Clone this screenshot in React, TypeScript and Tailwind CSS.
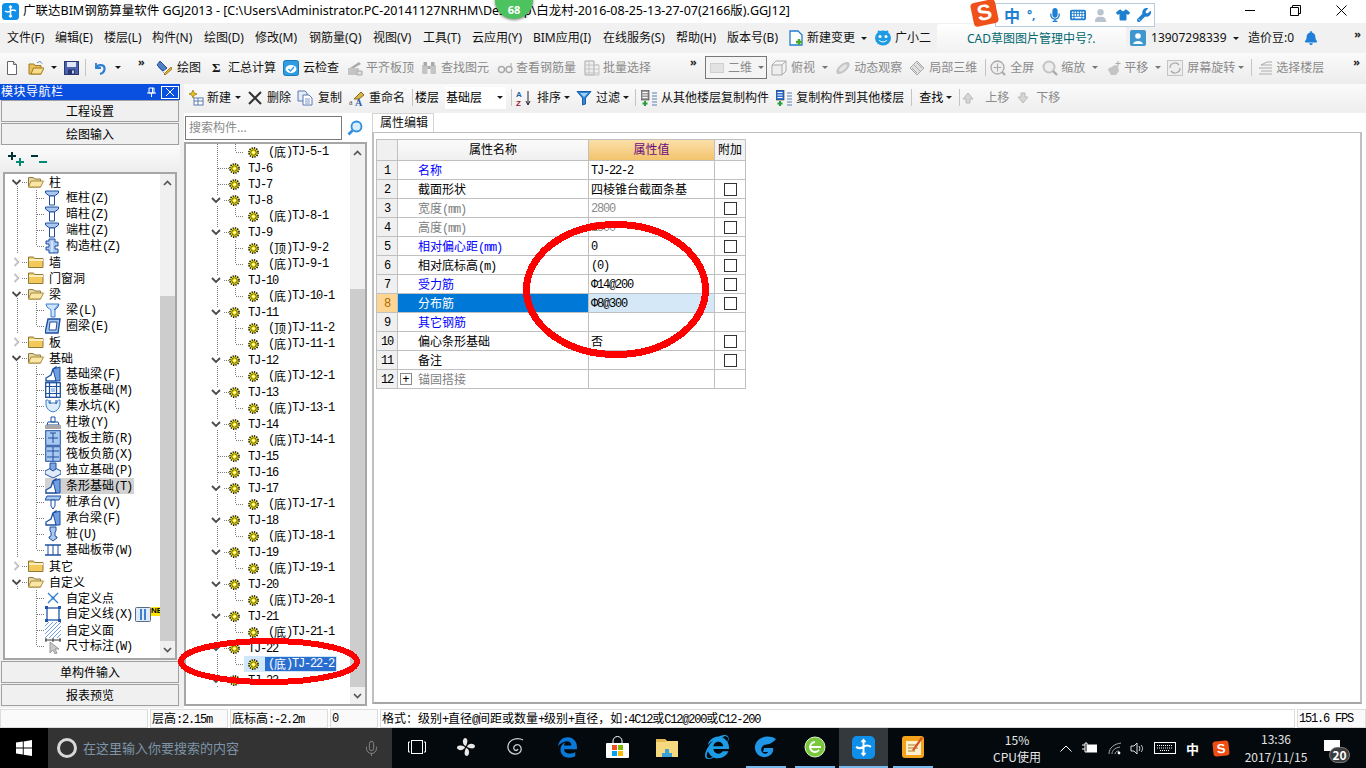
import type { ReactNode } from "react";
import { Mic } from "lucide-react";
import { FaEdgeLegacy, FaInternetExplorer, FaMicrophone, FaKeyboard, FaUser, FaShirt, FaWrench, FaBell } from "react-icons/fa6";

const SANS = "[font-family:'Noto_Sans','Noto_Sans_CJK_SC',sans-serif]";
const CJK = "[font-family:'Noto_Sans_CJK_SC',sans-serif]";

/* bitmap-looking mixed text: ascii goes in a tight mono, the rest stays cjk */
function Sim({ text, className = "" }: { text: string; className?: string }) {
  const parts = text.match(/[\x00-\x7fΦ]+|[^\x00-\x7fΦ]+/g) ?? [];
  return (
    <span className={`whitespace-nowrap leading-none ${className}`}>
      {parts.map((p, i) =>
        /^[\x00-\x7fΦ]/.test(p) ? (
          <span key={i} className="[font-family:'Liberation_Mono',monospace] text-[12px] tracking-[-1.2px]">{p}</span>
        ) : (
          <span key={i} className={CJK}>{p}</span>
        )
      )}
    </span>
  );
}

function Ic({ children, w = 16, h = 16 }: { children: ReactNode; w?: number; h?: number }) {
  return (
    <svg width={w} height={h} viewBox={`0 0 ${w} ${h}`} className="shrink-0" fill="none">
      {children}
    </svg>
  );
}

const Caret = ({ dark = true }: { dark?: boolean }) => (
  <span className={`inline-block w-0 h-0 shrink-0 border-x-[3px] border-t-[3px] border-x-transparent ${dark ? "border-t-[#1a1a1a]" : "border-t-[#777]"}`} />
);
const Sep = ({ className = "" }: { className?: string }) => <span className={`w-px h-[17px] bg-[#c4c4c4] shrink-0 ${className}`} />;
const More = ({ className = "" }: { className?: string }) => (
  <span className={`w-[9px] self-start mt-[3px] text-[11px] leading-none font-bold text-[#222] tracking-[-1px] shrink-0 ${className}`}>»</span>
);

function Tool({ icon, label, gray, gap, className = "" }: { icon?: ReactNode; label: string; gray?: boolean; gap: string; className?: string }) {
  return (
    <div className={`flex items-center shrink-0 whitespace-nowrap ${gap} ${className} ${gray ? "text-[#8a8a8a]" : "text-[#111]"}`}>
      {icon}
      <span>{label}</span>
    </div>
  );
}

/* ---------- toolbar icons ---------- */
const AppIcon = ({ size = 17 }: { size?: number }) => (
  <svg width={size} height={size} viewBox="0 0 17 17" className="shrink-0">
    <rect width="17" height="17" rx="3.5" fill="#0f8fe8" />
    <path d="M8.5 3v11M3 8c2 1.4 3.5 1.4 5.5 0s3.500-1.400 5.500 0" stroke="#fff" strokeWidth="1.500" fill="none" />
    <path d="M7 4.500 8.500 2.800 10 4.500M7 12.500 8.500 14.200 10 12.500" stroke="#fff" strokeWidth="1.200" fill="none" />
  </svg>
);
const NewDoc = () => <Ic w={12}><path d="M1.500 1.500h6l3 3v10h-9z" fill="#fff" stroke="#666" /><path d="M7.500 1.500v3h3" fill="#ddd" stroke="#666" /></Ic>;
const OpenIc = () => <Ic><path d="M1 4h5l1 1.500h6V14H1z" fill="#e8c060" stroke="#a07a20" /><path d="M3 14 5.500 8H16l-3 6z" fill="#f7dc8c" stroke="#a07a20" /><path d="M9 3c2-2 4-1.500 5 .5" stroke="#3f7fc0" /></Ic>;
const SaveIc = () => <Ic w={15}><rect x=".5" y="1.500" width="14" height="13" fill="#4a62b0" stroke="#27376f" /><rect x="3" y="2" width="9" height="5" fill="#dfe6f5" /><rect x="4" y="9.500" width="7" height="5" fill="#28356b" /><rect x="8" y="10.500" width="2" height="3" fill="#c8d0e8" /></Ic>;
const UndoIc = () => <Ic w={14}><path d="M3 3v5h5" stroke="#2f7fd0" strokeWidth="1.800" /><path d="M3 8c2-4 9-4 8.500 1.500C11 12 9 13.500 7 14" stroke="#2f7fd0" strokeWidth="2.200" /></Ic>;
const DrawIc = () => <Ic><path d="M4 1 11 8 7 11 1 5z" fill="#4f7fc4" stroke="#2a4f8c" /><path d="M8 14 15 7l1 2-7 6z" fill="#e9b93a" stroke="#a07a20" /><path d="M2 7l6 6" stroke="#8ab0e0" /></Ic>;
const CloudIc = () => <Ic><rect x=".5" y=".5" width="15" height="15" rx="2" fill="#2f9be0" stroke="#1b78bb" /><ellipse cx="8" cy="9" rx="5.500" ry="4" fill="#fff" /><path d="M5.500 9 7.500 11 11 7" stroke="#2f9be0" strokeWidth="1.400" /></Ic>;
const G = "#c4c4c4";
const GD = "#a9a9a9";
const AlignIc = () => <Ic><path d="M1 8h11v7H1z" fill={G} /><path d="M3 8 12 2l2 2-7 4z" fill={GD} /><path d="M10 11h5v4h-5z" fill="#ddd" stroke={GD} /></Ic>;
const BinoIc = () => <Ic><rect x="1" y="5" width="5.500" height="9" rx="1" fill={G} /><rect x="9.500" y="5" width="5.500" height="9" rx="1" fill={G} /><rect x="2.500" y="2" width="3.500" height="4" fill={GD} /><rect x="10" y="2" width="3.500" height="4" fill={GD} /><rect x="6.500" y="6" width="3" height="3" fill={GD} /></Ic>;
const GlassIc = () => <Ic><circle cx="4.500" cy="9.500" r="3" stroke={GD} strokeWidth="1.400" /><circle cx="12" cy="9.500" r="3" stroke={GD} strokeWidth="1.400" /><path d="M7.500 9h1.500M14 3v4" stroke={GD} /></Ic>;
const BatchIc = () => <Ic><path d="M1 1h9v14H1z" fill="#eee" stroke={GD} /><path d="M1 5h14M1 9h14M1 13h14M5 1v14M10 5h5v10h-5" stroke={G} /></Ic>;
const CubeIc = () => <Ic><path d="M1 5h10v10H1z" fill="#eee" stroke={GD} /><path d="M1 5l4-4h10v10l-4 4M11 5l4-4" stroke={GD} /></Ic>;
const OrbitIc = () => <Ic><ellipse cx="8" cy="8" rx="8" ry="4" transform="rotate(-40 8 8)" fill={G} /><ellipse cx="8" cy="8" rx="5" ry="2" transform="rotate(-40 8 8)" fill="#e4e4e4" /></Ic>;
const Part3dIc = () => <Ic><path d="M1 8 8 1l7 7-7 7z" fill="#e0e0e0" stroke={GD} /><path d="M5 5l7 7M8 3l5 5M3 8l5 5" stroke={GD} /></Ic>;
const FullIc = () => <Ic><circle cx="7.500" cy="7.500" r="6.500" fill="#eee" stroke={GD} strokeWidth="1.300" /><path d="M7.500 3.500v8M3.500 7.500h8" stroke={GD} /><path d="M12 12l3 3" stroke={GD} strokeWidth="2" /></Ic>;
const ZoomIc = () => <Ic><circle cx="7" cy="7" r="5.500" fill="#eee" stroke={G} strokeWidth="2" /><path d="M11 11l4 4" stroke={GD} strokeWidth="2.400" /></Ic>;
const PanIc = () => <Ic><path d="M2 10c0-3 4-2 5-4l2-1 3 1 1 5-3 4H5z" fill={G} /><path d="M12 1v5M9.500 3.500h5" stroke={GD} /></Ic>;
const RotIc = () => <Ic><rect x=".5" y=".5" width="15" height="15" fill="#eee" stroke={G} /><path d="M3 8a5 5 0 0 1 9-3M13 8a5 5 0 0 1-9 3" stroke={GD} strokeWidth="1.300" /></Ic>;
const FloorIc = () => <Ic><path d="M3 5h11M1 8h13M3 11h11M1 14h13" stroke={G} strokeWidth="1.500" /><path d="M3 5l6-3h5" stroke={GD} /></Ic>;
const NewItemIc = () => <Ic><path d="M5 0l1.200 2.800L9 4 6.200 5.200 5 8 3.800 5.200 1 4l2.800-1.200z" fill="#f0c020" stroke="#7a6000" strokeWidth=".6" /><rect x="6" y="8" width="9" height="7" fill="#fff" stroke="#5a7ab0" /><path d="M6 11h9M10 8v7" stroke="#5a7ab0" /></Ic>;
const CopyIc = () => <Ic><path d="M1 1h7l2 2v8H1z" fill="#e4ecf8" stroke="#5a7ab0" /><path d="M6 5h6l3 3v7H6z" fill="#fff" stroke="#5a7ab0" /><path d="M8 9h5M8 11h5M8 13h5" stroke="#7a9ad0" /></Ic>;
const RenameIc = () => <Ic><path d="M5 9 12 2l3 3-5 4z" fill="#d9b24c" stroke="#8a6c18" /><text x="0" y="15" fontSize="8" fill="#555" className="[font-family:'Liberation_Serif',serif]">a</text><text x="6" y="15.500" fontSize="10" fontWeight="700" fill="#2a5fa8" className="[font-family:'Liberation_Serif',serif]">A</text></Ic>;
const SortIc = () => <Ic><text x="0" y="7" fontSize="8" fontWeight="700" fill="#2a5fa8" className="[font-family:'Liberation_Sans',sans-serif]">A</text><text x="0" y="15.500" fontSize="8" fontWeight="700" fill="#9a2030" className="[font-family:'Liberation_Sans',sans-serif]">Z</text><path d="M12 1v13M10 11l2 4 2-4" stroke="#222" /></Ic>;
const FunnelIc = () => <Ic><path d="M1 1.500h14L9.500 8v6l-3 1V8z" fill="#2f86d8" stroke="#1c5fa8" /><path d="M4 3h8L8 7z" fill="#9fd0f5" /></Ic>;
const StackIc = ({ top }: { top: string }) => <Ic><rect x="0" y="0" width="8" height="10" fill={top} stroke="#333" strokeWidth=".6" /><path d="M1.500 2.500h5M1.500 5h5M1.500 7.500h5" stroke="#fff" /><path d="M11 3h5M11 6h5M11 9h5M11 12h5M11 15h5" stroke="#557fb0" strokeWidth="1.200" /><path d="M4 11v5M1.500 13.500h5" stroke="#27a03a" strokeWidth="2" /></Ic>;
const UpIc = () => <Ic><path d="M8 3l5 6h-3v4H6V9H3z" fill="#d5d5d5" stroke="#bbb" /></Ic>;
const DownIc = () => <Ic><path d="M8 13 3 7h3V3h4v4h3z" fill="#d5d5d5" stroke="#bbb" /></Ic>;

/* ---------- nav tree icons ---------- */
const B = "#1d4fa0";
const L = "#a8c8ef";
const Folder = ({ open }: { open: boolean }) =>
  open ? (
    <Ic><path d="M.5 3.500h5l1 1.500h6v8H.5z" fill="#e9d7a0" stroke="#8d7a40" /><path d="M3 7h12.500l-3 6H.5z" fill="#fbe6a6" stroke="#a98b3c" /></Ic>
  ) : (
    <Ic><path d="M.5 3h5l1 1.500h8.500v9H.5z" fill="#f4c95a" stroke="#8d7a40" /><path d="M1 5h14v2H1z" fill="#fdf0bc" /></Ic>
  );
const TCol = () => <Ic><path d="M.5 1h13v2L9.500 6H4.500L.5 3z" fill={L} stroke={B} /><path d="M4.500 6h5v9h-5z" fill="#fff" stroke={B} /></Ic>;
const PuzzleIc = () => <Ic><path d="M4 1h6v3h3v4h-3v3h3v4H4v-3H1V9h3V6H1V3h3z" fill={L} stroke={B} /><path d="M7 3v11" stroke="#fff" /></Ic>;
const BeamIc = () => <Ic><path d="M1 2h13l-1 3-3 3v7H6V8L2 5z" fill="#cfe3fa" stroke="#3d7fd0" /><path d="M9 8l5-6" stroke="#3d7fd0" /></Ic>;
const RingIc = () => <Ic><path d="M3 1h12l-2 14H0z" fill={L} stroke={B} strokeWidth="1.400" /><path d="M5 4h7l-1 8H4z" fill="#fff" stroke={B} /></Ic>;
const FootIc = () => <Ic><path d="M1 15v-3l5-3 2-6 3-2v14z" fill="#fff" stroke={B} strokeWidth="1.300" /><path d="M8 3l7-2v14h-4z" fill="#6f9fe0" stroke={B} /></Ic>;
const RaftIc = () => <Ic><rect x=".7" y=".7" width="14.600" height="14.600" fill="#fff" stroke={B} strokeWidth="1.300" /><path d="M.7 4.500h14.600M.7 11.500h14.600M4.500.7v14.600M11.500.7v14.600" stroke={B} strokeWidth="1.200" /><rect x="6" y="6" width="4" height="4" fill={L} /></Ic>;
const PitIc = () => <Ic><path d="M1 2c2 0 3 0 3 3h8c0-3 1-3 3-3v5c-1 4-3 6-7 7-4-1-6-3-7-7z" fill="#dcecfb" stroke="#3d7fd0" /><path d="M5 2v4M11 2v4" stroke={B} /></Ic>;
const PierIc = () => <Ic><path d="M6 3h4v5H6zM3 8h10l1 3H2z" fill="#fff" stroke={B} /><rect y="11" width="16" height="4" fill="#a8a8a8" /></Ic>;
const RaftMain = () => <Ic><rect x=".7" y=".7" width="14.600" height="14.600" fill={L} stroke={B} /><path d="M8 3v10M3 8h10M5 3h6" stroke={B} /></Ic>;
const RaftNeg = () => <Ic><rect x=".7" y=".7" width="14.600" height="14.600" fill={L} stroke={B} /><path d="M2 5h12M2 11h12M8 1v14" stroke={B} /></Ic>;
const BlockIc = () => <Ic><path d="M0 9l8-4 8 4v3l-8 4-8-4z" fill="#dfeafa" stroke={B} /><path d="M5 1h6v6l-3 2-3-2z" fill="#7fa8e0" stroke={B} /></Ic>;
const CapIc = () => <Ic><path d="M2 2h14l-2 4H0z" fill={L} stroke={B} /><path d="M6 6h4v6l-2 3-2-3z" fill="#fff" stroke={B} /></Ic>;
const PileIc = () => <Ic><path d="M5 1h6v4l-1 1v4l2 1v1l-4 3-4-3v-1l2-1V6L5 5z" fill={L} stroke={B} /></Ic>;
const BandIc = () => <Ic><path d="M0 3h16M0 13h16" stroke={B} strokeWidth="1.300" /><path d="M3 3v10M8 3v10M13 3v10" stroke={B} /></Ic>;
const XIc = () => <Ic><path d="M3 3l10 10M13 3 3 13" stroke="#2f7fd0" strokeWidth="1.300" /><circle cx="8" cy="8" r="1.500" fill="#2f7fd0" /></Ic>;
const LineIc = () => <Ic><rect x="2" y="2" width="12" height="12" fill="#fff" stroke="#1d55a8" strokeWidth="1.300" /><path d="M0 0h3v3H0zM13 0h3v3h-3zM0 13h3v3H0zM13 13h3v3h-3z" fill="#1d55a8" /></Ic>;
const HatchIc = () => <Ic><path d="M0 4 4 0M0 8l8-8M0 12 12 0M0 16 16 0M4 16 16 4M8 16l8-8M12 16l4-4" stroke="#6f9fe0" /></Ic>;
const DimIc = () => <Ic><path d="M0 2h16M1 0v4M8 0v4M15 0v4" stroke="#333" /><path d="M5 4v11l3-3 2 4 2-1-2-4h4z" fill="#c8c8c8" stroke="#999" /></Ic>;
const Gear = () => (
  <svg width="11" height="11" viewBox="0 0 12 12" className="shrink-0">
    <circle cx="6" cy="6" r="5" fill="#ffef00" stroke="#222" strokeWidth="1.800" strokeDasharray="1.500 1.100" />
    <circle cx="6" cy="6" r="3" fill="#ffef00" stroke="#444" strokeWidth="1" />
    <circle cx="6" cy="6" r="1.200" fill="#fff" />
  </svg>
);

/* ---------- tree connectors ---------- */
const Dot = ({ d }: { d: string }) => <path d={d} stroke="#7a7a7a" strokeDasharray="1 1" shapeRendering="crispEdges" />;
const Chev = ({ x, open }: { x: number; open: boolean }) =>
  open ? (
    <path d={`M${x - 4} 6l4 4 4-4`} stroke="#4a4a4a" strokeWidth="1.800" fill="none" />
  ) : (
    <path d={`M${x - 2} 4l4 4-4 4`} stroke="#c2c2c2" strokeWidth="1.800" fill="none" />
  );

type NavRow = { label: string; open?: boolean; icon?: ReactNode; last?: boolean; trunk?: boolean; active?: boolean; extra?: boolean };
const NAV_ROWS: NavRow[] = [
  { label: "柱", open: true },
  { label: "框柱(Z)", icon: <TCol />, trunk: true },
  { label: "暗柱(Z)", icon: <TCol />, trunk: true },
  { label: "端柱(Z)", icon: <TCol />, trunk: true },
  { label: "构造柱(Z)", icon: <PuzzleIc />, trunk: true, last: true },
  { label: "墙", open: false },
  { label: "门窗洞", open: false },
  { label: "梁", open: true },
  { label: "梁(L)", icon: <BeamIc />, trunk: true },
  { label: "圈梁(E)", icon: <RingIc />, trunk: true, last: true },
  { label: "板", open: false },
  { label: "基础", open: true },
  { label: "基础梁(F)", icon: <FootIc />, trunk: true },
  { label: "筏板基础(M)", icon: <RaftIc />, trunk: true },
  { label: "集水坑(K)", icon: <PitIc />, trunk: true },
  { label: "柱墩(Y)", icon: <PierIc />, trunk: true },
  { label: "筏板主筋(R)", icon: <RaftMain />, trunk: true },
  { label: "筏板负筋(X)", icon: <RaftNeg />, trunk: true },
  { label: "独立基础(P)", icon: <BlockIc />, trunk: true },
  { label: "条形基础(T)", icon: <FootIc />, trunk: true, active: true },
  { label: "桩承台(V)", icon: <CapIc />, trunk: true },
  { label: "承台梁(F)", icon: <FootIc />, trunk: true },
  { label: "桩(U)", icon: <PileIc />, trunk: true },
  { label: "基础板带(W)", icon: <BandIc />, trunk: true, last: true },
  { label: "其它", open: false },
  { label: "自定义", open: true },
  { label: "自定义点", icon: <XIc /> },
  { label: "自定义线(X)", icon: <LineIc />, extra: true },
  { label: "自定义面", icon: <HatchIc /> },
  { label: "尺寸标注(W)", icon: <DimIc />, last: true },
];

function NavTreeRow({ row }: { row: NavRow }) {
  if (row.icon) {
    return (
      <div className="h-4 flex items-center">
        <svg width="40" height="16" viewBox="4 0 40 16" className="shrink-0">
          {row.trunk && <Dot d="M16.500 0v16" />}
          <Dot d={row.last ? "M35.500 0v8" : "M35.500 0v16"} />
          <Dot d="M36 8.500h8" />
        </svg>
        <div className={`flex items-center h-4 pr-[2px] ${row.active ? "bg-[#d2d2d2]" : ""}`}>
          {row.icon}
          <Sim text={row.label} className="ml-[5px]" />
        </div>
        {row.extra && (
          <>
            <svg width="16" height="15" viewBox="0 0 16 15" className="shrink-0 ml-px">
              <rect x=".5" y=".5" width="15" height="14" rx="1" fill="#dfeafa" stroke="#5a6a80" />
              <path d="M5 2h2v11H5zM9 2h2v11H9z" fill="#3d7fd0" />
            </svg>
            <span className="bg-[#ffe600] text-[8px] font-bold leading-none h-[9px] w-[11px] overflow-hidden self-start mt-[1px] [font-family:'Liberation_Sans',sans-serif]">NE</span>
          </>
        )}
      </div>
    );
  }
  return (
    <div className="h-4 flex items-center">
      <svg width="23" height="16" viewBox="4 0 23 16" className="shrink-0">
        <Dot d="M21 8.500h6" />
        {row.open && <Dot d="M16.500 12v4" />}
        <Chev x={15.500} open={!!row.open} />
      </svg>
      <Folder open={!!row.open} />
      <span className={`ml-[5px] leading-none ${CJK}`}>{row.label}</span>
    </div>
  );
}

type TjRow = { label: string; child?: boolean; kids?: boolean; mid?: boolean; selected?: boolean };
const TJ_ROWS: TjRow[] = [
  { label: "(底)TJ-5-1", child: true },
  { label: "TJ-6" },
  { label: "TJ-7" },
  ...[8, 9, 10, 11, 12, 13, 14].flatMap((n): TjRow[] => {
    const base: TjRow = { label: `TJ-${n}`, kids: true };
    if (n === 9 || n === 11) return [base, { label: `(顶)TJ-${n}-2`, child: true, mid: true }, { label: `(底)TJ-${n}-1`, child: true }];
    return [base, { label: `(底)TJ-${n}-1`, child: true }];
  }),
  { label: "TJ-15" },
  { label: "TJ-16" },
  ...[17, 18, 19, 20, 21].flatMap((n): TjRow[] => [{ label: `TJ-${n}`, kids: true }, { label: `(底)TJ-${n}-1`, child: true }]),
  { label: "TJ-22", kids: true },
  { label: "(底)TJ-22-2", child: true, selected: true },
  { label: "TJ-23", kids: true },
];

function TjTreeRow({ row }: { row: TjRow }) {
  if (row.child) {
    return (
      <div className="h-4 flex items-center">
        <svg width="58" height="16" viewBox="186 0 58 16" className="shrink-0">
          <Dot d="M217.500 0v16" />
          <Dot d={row.mid ? "M235.500 0v16" : "M235.500 0v8"} />
          <Dot d="M236 8.500h8" />
        </svg>
        <div className={`flex items-center h-4 w-[93px] pl-[4px] ${row.selected ? "bg-[#cfe6fb]" : ""}`}>
          <Gear />
          <Sim text={row.label} className={`ml-[6px] h-[14px] flex items-center pl-[3px] pr-[2px] ${row.selected ? "bg-[#2a6fd0] text-white" : ""}`} />
        </div>
      </div>
    );
  }
  return (
    <div className="h-4 flex items-center">
      <svg width="43" height="16" viewBox="186 0 43 16" className="shrink-0">
        <Dot d="M217.500 0v16" />
        {row.kids ? <Dot d="M224 8.500h5" /> : <Dot d="M218 8.500h11" />}
        {row.kids && <rect x="210" y="3" width="12" height="10" fill="#fff" />}
        {row.kids && <Chev x={216} open />}
      </svg>
      <Gear />
      <Sim text={row.label} className="ml-[8px]" />
    </div>
  );
}

function ScrollArrows({ thumb }: { thumb: string }) {
  return (
    <div className="w-[15px] shrink-0 bg-[#f0f0f0] flex flex-col">
      <div className="h-[17px] shrink-0 flex items-center justify-center">
        <svg width="9" height="6" viewBox="0 0 9 6"><path d="M1 5l3.500-3.500L8 5" stroke="#555" strokeWidth="1.700" fill="none" /></svg>
      </div>
      <div className={`flex-1 flex flex-col ${thumb}`}>
        <div className="flex-1 bg-[#cdcdcd]" />
      </div>
      <div className="h-[17px] shrink-0 flex items-center justify-center">
        <svg width="9" height="6" viewBox="0 0 9 6"><path d="M1 1l3.500 3.500L8 1" stroke="#555" strokeWidth="1.700" fill="none" /></svg>
      </div>
    </div>
  );
}

/* ---------- property table ---------- */
type Prop = { name: string; value?: string; tone: "blue" | "black" | "gray"; check?: boolean; expand?: boolean };
const PROPS: Prop[] = [
  { name: "名称", value: "TJ-22-2", tone: "blue" },
  { name: "截面形状", value: "四棱锥台截面条基", tone: "black", check: true },
  { name: "宽度(mm)", value: "2800", tone: "gray", check: true },
  { name: "高度(mm)", value: "1500", tone: "gray", check: true },
  { name: "相对偏心距(mm)", value: "0", tone: "blue", check: true },
  { name: "相对底标高(m)", value: "(0)", tone: "black", check: true },
  { name: "受力筋", value: "Φ14@200", tone: "blue", check: true },
  { name: "分布筋", value: "Φ8@300", tone: "black", check: true },
  { name: "其它钢筋", tone: "blue" },
  { name: "偏心条形基础", value: "否", tone: "black", check: true },
  { name: "备注", tone: "black", check: true },
  { name: "锚固搭接", tone: "gray", expand: true },
];

function PropRow({ p, n }: { p: Prop; n: number }) {
  const sel = n === 8;
  const tone = sel ? "text-white" : p.tone === "blue" ? "text-[#0000ff]" : p.tone === "gray" ? "text-[#808080]" : "text-black";
  const valueTone = p.tone === "gray" ? "text-[#8c8c8c]" : "text-black";
  return (
    <div className="flex h-[19px] border-b border-[#c0c0c0]">
      <div className={`w-[21px] shrink-0 border-r border-[#c0c0c0] flex items-center justify-center ${sel ? "bg-[#ffd593] text-[#a86a00]" : "bg-[#f0f0f0]"}`}>
        <Sim text={String(n)} />
      </div>
      <div className={`w-[191px] shrink-0 border-r border-[#c0c0c0] flex items-center pl-[2px] ${sel ? "bg-[#0078d7]" : ""}`}>
        <span className="w-[18px] shrink-0 flex items-center">
          {p.expand && <span className="w-[12px] h-[12px] border border-[#888] flex items-center justify-center text-[12px] leading-none">+</span>}
        </span>
        <Sim text={p.name} className={`pt-px ${tone}`} />
      </div>
      <div className={`w-[126px] shrink-0 border-r border-[#c0c0c0] flex items-center pl-[2px] ${sel ? "bg-[#d5e8f8]" : ""}`}>
        {p.value && <Sim text={p.value} className={valueTone} />}
      </div>
      <div className="w-[31px] shrink-0 border-r border-[#c0c0c0] flex items-center justify-center">
        {p.check && <span className="w-[13px] h-[13px] border border-[#333] bg-white" />}
      </div>
    </div>
  );
}

const PanelButton = ({ label }: { label: string }) => (
  <div className="h-[22px] mx-px pt-[2px] border border-[#a0a0a0] bg-[#f0f0f0] flex items-center justify-center leading-none">{label}</div>
);

const StatusCell = ({ className, children }: { className: string; children?: ReactNode }) => (
  <div className={`h-[19px] border border-[#dcdcdc] bg-[#fafafa] flex items-center pl-px shrink-0 ${className}`}>{children}</div>
);

const TASK_ICONS: { el: ReactNode; w: string; bar?: boolean; on?: boolean }[] = [
  { w: "w-[49px]", el: <svg width="18" height="14" viewBox="0 0 18 14"><rect x="3.500" y=".5" width="11" height="13" stroke="#fff" fill="none" /><path d="M2 2H.5v10H2M16 2h1.500v10H16" stroke="#fff" fill="none" /></svg> },
  { w: "w-[50px]", el: <svg width="20" height="20" viewBox="0 0 20 20" fill="#e8e8e8"><path d="M10 9C6 8 6 2 9 1c3 0 3 4 1 8zM11 10c1-4 7-4 8-1 0 3-4 3-8 1zM10 11c4 1 4 7 1 8-3 0-3-4-1-8zM9 10c-1 4-7 4-8 1 0-3 4-3 8-1z" /></svg> },
  { w: "w-[50px]", el: <svg width="20" height="20" viewBox="0 0 20 20" fill="none" stroke="#cfcfcf" strokeWidth="1.300"><path d="M17 3C12 0 3 2 2 9c-1 6 6 10 11 7 3-2 3-6 0-8-3-1-6 1-5 4 1 2 3 2 4 0" /></svg> },
  { w: "w-[52px]", el: <FaEdgeLegacy className="text-[#0a78d6] text-[21px]" /> },
  { w: "w-[49px]", el: <svg width="23" height="23" viewBox="0 0 23 23"><path d="M7 7V5a4.500 4.500 0 0 1 9 0v2" stroke="#fff" fill="none" /><rect y="7" width="23" height="15" rx="1" fill="#fff" /><rect x="6" y="9" width="5" height="5" fill="#f25022" /><rect x="12" y="9" width="5" height="5" fill="#7fba00" /><rect x="6" y="15" width="5" height="5" fill="#00a4ef" /><rect x="12" y="15" width="5" height="5" fill="#ffb900" /></svg> },
  { w: "w-[50px]", el: <svg width="22" height="19" viewBox="0 0 22 19"><path d="M0 1h9l2 2h11v16H0z" fill="#f6d97e" /><path d="M0 1h9l1 3H0z" fill="#e3b94f" /><path d="M6 15h3v-4h4v4h3v4H6z" fill="#39a0d8" /></svg> },
  { w: "w-[49px]", el: <span className="relative flex"><FaInternetExplorer className="text-[#1d9ce5] text-[24px]" /></span> },
  { w: "w-[49px]", bar: true, el: <svg width="24" height="24" viewBox="0 0 24 24"><path d="M22 4C14-1 3 2 1 11c-1 7 5 12 11 11 5-1 8-5 7-9h-9l-1 4h5c-1 2-3 2-5 1-3-2-2-6 1-8 3-1 7 0 12-6z" fill="#1f96e8" /></svg> },
  { w: "w-[49px]", bar: true, el: <svg width="22" height="22" viewBox="0 0 22 22"><circle cx="11" cy="11" r="10" fill="#79c83c" stroke="#dff3cc" /><path d="M5 11h12M11 6a5 5 0 1 0 4 8" stroke="#fff" strokeWidth="1.800" fill="none" /></svg> },
  { w: "w-[49px]", bar: true, on: true, el: <AppIcon size={23} /> },
  { w: "w-[49px]", bar: true, el: <svg width="24" height="24" viewBox="0 0 24 24"><rect x="1" y="1" width="22" height="22" rx="3" fill="#f5a31a" /><rect x="5" y="6" width="15" height="14" fill="#fdf1cf" /><path d="M7 10h10M7 13h10M7 16h7" stroke="#b07a20" /><path d="M11 15 20 2l2 1-9 13z" fill="#d8522a" /></svg> },
];

export default function App() {
  return (
    <div className={`relative w-[1366px] h-[768px] overflow-hidden flex flex-col bg-[#f0f0f0] text-[12px] text-black ${SANS}`}>
      {/* title bar */}
      <header className="h-[23px] bg-white flex items-center shrink-0">
        <div className="ml-[2px]"><AppIcon /></div>
        <span className="ml-[4px] text-[12.5px] whitespace-nowrap">广联达BIM钢筋算量软件 GGJ2013 - [C:\Users\Administrator.PC-20141127NRHM\Desktop\白龙村-2016-08-25-13-27-07(2166版).GGJ12]</span>
        <div className="ml-auto flex items-center mb-[3px]">
          <span className="w-[10px] h-px bg-black" />
          <svg width="11" height="11" viewBox="0 0 11 11" className="ml-[35px]"><path d="M.5 2.500h8v8h-8zM2.500 2.500v-2h8v8h-2" fill="none" stroke="#000" /></svg>
          <svg width="11" height="11" viewBox="0 0 11 11" className="ml-[35px] mr-[19px]"><path d="M.5.5l10 10M10.500.5l-10 10" stroke="#000" /></svg>
        </div>
      </header>

      {/* menu bar */}
      <nav className="h-[30px] bg-[#f1f1f1] flex items-center pl-[7px] shrink-0 whitespace-nowrap text-[#111]">
        <span className="w-[48px]">文件(F)</span>
        <span className="w-[49px]">编辑(E)</span>
        <span className="w-[48px]">楼层(L)</span>
        <span className="w-[52px]">构件(N)</span>
        <span className="w-[51px]">绘图(D)</span>
        <span className="w-[54px]">修改(M)</span>
        <span className="w-[64px]">钢筋量(Q)</span>
        <span className="w-[50px]">视图(V)</span>
        <span className="w-[49px]">工具(T)</span>
        <span className="w-[61px]">云应用(Y)</span>
        <span className="w-[70px]">BIM应用(I)</span>
        <span className="w-[73px]">在线服务(S)</span>
        <span className="w-[51px]">帮助(H)</span>
        <span className="w-[61px]">版本号(B)</span>
        <Ic><path d="M2 1h8l4 4v10H2z" fill="#fff" stroke="#1f7fd0" strokeWidth="1.300" /><path d="M11 9v6M8 12h6" stroke="#4aa82e" strokeWidth="2.400" /></Ic>
        <span className="ml-[3px]">新建变更</span>
        <span className="ml-[6px] flex"><Caret /></span>
        <span className="ml-[7px]">
          <svg width="18" height="16" viewBox="0 0 18 16" className="block"><ellipse cx="9" cy="8" rx="8" ry="7.500" fill="#1f9be6" /><path d="M4 1l3 2M14 1l-3 2" stroke="#1f9be6" strokeWidth="2" /><circle cx="6" cy="6.500" r="1.500" fill="#fff" /><circle cx="12" cy="6.500" r="1.500" fill="#fff" /><path d="M5 10c2 2.500 6 2.500 8 0" stroke="#fff" fill="none" /></svg>
        </span>
        <span className="ml-[3px]">广小二</span>
        <div className="ml-[6px] w-[189px] h-[29px] self-end rounded-t-[3px] bg-gradient-to-b from-white to-[#f1f1f1] flex items-center pl-[30px] text-[#00686e]">CAD草图图片管理中号?.</div>
        <svg width="16" height="16" viewBox="0 0 16 16" className="ml-[4px] shrink-0"><rect width="16" height="16" rx="2" fill="#3f97d0" /><circle cx="8" cy="6" r="2.800" fill="#fff" /><path d="M3 14c1-4 9-4 10 0z" fill="#fff" /></svg>
        <span className="ml-[5px] w-[76px]">13907298339</span>
        <span className="ml-[6px] flex"><Caret /></span>
        <span className="ml-[9px]">造价豆:0</span>
        <FaBell className="ml-[10px] text-[#1f7fd8] text-[14px]" />
        <More className="ml-[36px] self-start mt-[5px]" />
      </nav>

      {/* main toolbar */}
      <div className="h-[31px] pb-[2px] bg-gradient-to-b from-[#fafafa] to-[#ececec] flex items-center pl-[6px] shrink-0 whitespace-nowrap">
        <NewDoc />
        <div className="ml-[10px]"><OpenIc /></div>
        <div className="ml-[7px] flex"><Caret /></div>
        <div className="ml-[7px]"><SaveIc /></div>
        <Sep className="ml-[6px]" />
        <div className="ml-[7px]"><UndoIc /></div>
        <div className="ml-[8px] flex"><Caret /></div>
        <More className="ml-[17px]" />
        <Tool className="ml-[9px]" gap="gap-[5px]" icon={<DrawIc />} label="绘图" />
        <Tool className="ml-[11px]" gap="gap-[7px]" icon={<span className="w-[9px] text-[13px] font-bold leading-none [font-family:'Liberation_Serif',serif]">Σ</span>} label="汇总计算" />
        <Tool className="ml-[7px]" gap="gap-[4px]" icon={<CloudIc />} label="云检查" />
        <Tool gray className="ml-[8px]" gap="gap-[3px]" icon={<AlignIc />} label="平齐板顶" />
        <Tool gray className="ml-[7px]" gap="gap-[4px]" icon={<BinoIc />} label="查找图元" />
        <Tool gray className="ml-[8px]" gap="gap-[3px]" icon={<GlassIc />} label="查看钢筋量" />
        <Tool gray className="ml-[8px]" gap="gap-[3px]" icon={<BatchIc />} label="批量选择" />
        <More className="ml-[39px]" />
        <div className="ml-[6px] w-[62px] h-[23px] border border-[#777] bg-[#f4f4f4] flex items-center pl-[4px] text-[#8a8a8a] shrink-0">
          <span className="w-[14px] h-[10px] bg-[#e2e2e2] border border-[#cfcfcf]" />
          <span className="ml-[4px]">二维</span>
          <span className="ml-[6px] flex"><Caret dark={false} /></span>
        </div>
        <Tool gray className="ml-[4px]" gap="gap-[4px]" icon={<CubeIc />} label="俯视" />
        <div className="ml-[7px] flex"><Caret dark={false} /></div>
        <Tool gray className="ml-[7px]" gap="gap-[3px]" icon={<OrbitIc />} label="动态观察" />
        <Tool gray className="ml-[7px]" gap="gap-[4px]" icon={<Part3dIc />} label="局部三维" />
        <Sep className="ml-[8px]" />
        <Tool gray className="ml-[4px]" gap="gap-[4px]" icon={<FullIc />} label="全屏" />
        <Tool gray className="ml-[8px]" gap="gap-[3px]" icon={<ZoomIc />} label="缩放" />
        <div className="ml-[7px] flex"><Caret dark={false} /></div>
        <Tool gray className="ml-[8px]" gap="gap-[2px]" icon={<PanIc />} label="平移" />
        <div className="ml-[7px] flex"><Caret dark={false} /></div>
        <Tool gray className="ml-[6px]" gap="gap-[4px]" icon={<RotIc />} label="屏幕旋转" />
        <div className="ml-[3px] flex"><Caret dark={false} /></div>
        <Sep className="ml-[7px]" />
        <Tool gray className="ml-[6px]" gap="gap-[2px]" icon={<FloorIc />} label="选择楼层" />
        <More className="ml-[29px]" />
      </div>

      <main className="flex-1 min-h-0 flex">
        {/* module nav */}
        <aside className="w-[180px] shrink-0 flex flex-col">
          <div className="h-[16px] bg-[#0a50e0] text-white flex items-center shrink-0">
            <span className="ml-px leading-none tracking-[0.5px]">模块导航栏</span>
            <svg width="9" height="10" viewBox="0 0 9 10" className="ml-auto"><path d="M2 1h5v5H2zM0 6h9M4.500 6v4M5.500 1v5" stroke="#fff" fill="none" /></svg>
            <span className="ml-[5px] mr-[1px] w-[18px] h-[13px] border border-white flex items-center justify-center">
              <svg width="8" height="8" viewBox="0 0 8 8"><path d="M0 0l8 8M8 0 0 8" stroke="#fff" /></svg>
            </span>
          </div>
          <PanelButton label="工程设置" />
          <div className="mt-px"><PanelButton label="绘图输入" /></div>
          <div className="h-[27px] flex items-center pl-[8px] bg-gradient-to-b from-[#fbfbfb] to-[#eeeeee] shrink-0">
            <svg width="16" height="14" viewBox="0 0 16 14"><path d="M4 0v8M0 4h8" stroke="#033" strokeWidth="2" /><path d="M12 6v8M8 10h8" stroke="#087" strokeWidth="2" /></svg>
            <svg width="16" height="10" viewBox="0 0 16 10" className="ml-[7px]"><path d="M0 2h7" stroke="#033" strokeWidth="2" /><path d="M8 8h8" stroke="#087" strokeWidth="2" /></svg>
          </div>
          <div className="h-[488px] mx-[3px] border-2 border-[#a6a6a6] bg-white flex shrink-0">
            <div className="flex-1 min-w-0 overflow-hidden">
              {NAV_ROWS.map((r) => <NavTreeRow key={r.label} row={r} />)}
            </div>
            <ScrollArrows thumb="pt-[105px]" />
          </div>
          <div className="mt-px"><PanelButton label="单构件输入" /></div>
          <div className="mt-px"><PanelButton label="报表预览" /></div>
        </aside>

        <div className="flex-1 min-w-0 ml-[4px] flex flex-col">
          {/* component toolbar */}
          <div className="h-[27px] bg-gradient-to-b from-[#fbfbfb] to-[#eeeeee] flex items-center shrink-0 whitespace-nowrap pl-[4px]">
            <Tool gap="gap-[3px]" icon={<NewItemIc />} label="新建" />
            <div className="ml-[4px] flex"><Caret /></div>
            <Tool className="ml-[7px]" gap="gap-[5px]" icon={<svg width="14" height="14" viewBox="0 0 14 14" className="shrink-0"><path d="M1 1l12 12M13 1 1 13" stroke="#333" strokeWidth="2" /></svg>} label="删除" />
            <Tool className="ml-[6px]" gap="gap-[5px]" icon={<CopyIc />} label="复制" />
            <Tool className="ml-[7px]" gap="gap-[4px]" icon={<RenameIc />} label="重命名" />
            <Sep className="ml-[7px]" />
            <span className="ml-[2px]">楼层</span>
            <div className="ml-[6px] w-[61px] h-[22px] bg-white flex items-center pl-px shrink-0">
              <span>基础层</span>
              <span className="ml-auto mr-[3px] flex"><Caret /></span>
            </div>
            <Sep className="ml-[5px]" />
            <Tool className="ml-[4px]" gap="gap-[5px]" icon={<SortIc />} label="排序" />
            <div className="ml-[3px] flex"><Caret /></div>
            <Tool className="ml-[6px]" gap="gap-[4px]" icon={<FunnelIc />} label="过滤" />
            <div className="ml-[3px] flex"><Caret /></div>
            <Sep className="ml-[6px]" />
            <Tool className="ml-[5px]" gap="gap-[4px]" icon={<StackIc top="#999" />} label="从其他楼层复制构件" />
            <Tool className="ml-[7px]" gap="gap-[4px]" icon={<StackIc top="#2f6fd0" />} label="复制构件到其他楼层" />
            <Sep className="ml-[7px]" />
            <span className="ml-[7px]">查找</span>
            <div className="ml-[3px] flex"><Caret /></div>
            <Sep className="ml-[7px]" />
            <Tool gray gap="gap-[9px]" icon={<UpIc />} label="上移" />
            <Tool gray className="ml-[6px]" gap="gap-[5px]" icon={<DownIc />} label="下移" />
          </div>

          <div className="flex-1 min-h-0 flex pt-[2px]">
            {/* component list */}
            <section className="w-[184px] shrink-0 bg-white flex flex-col pb-[2px]">
              <div className="h-[29px] flex items-center shrink-0 pl-[1px]">
                <div className="w-[157px] h-[24px] border border-[#7a7a7a] flex items-center pl-[3px] text-[12px] text-[#8a8a8a]">搜索构件...</div>
                <svg width="16" height="16" viewBox="0 0 16 16" className="ml-[5px]"><circle cx="9.500" cy="6.500" r="5" fill="#d8eefc" stroke="#2f8fe0" strokeWidth="1.800" /><path d="M5.500 10.500 1.500 14.500" stroke="#2f8fe0" strokeWidth="2.600" /></svg>
              </div>
              <div className="flex-1 min-h-0 mr-[1px] border-2 border-[#a6a6a6] flex">
                <div className="flex-1 min-w-0 overflow-hidden">
                  {TJ_ROWS.map((r) => <TjTreeRow key={r.label} row={r} />)}
                </div>
                <ScrollArrows thumb="pt-[128px]" />
              </div>
            </section>

            {/* property editor */}
            <section className="flex-1 min-w-0 pl-[4px] pr-[4px] flex flex-col bg-white">
              <div className="h-[19px] shrink-0 flex">
                <div className="w-[62px] bg-white border border-b-0 border-[#d4d4d4] flex items-center pl-[7px] text-[#111] text-[12px]">属性编辑</div>
              </div>
              <div className="flex-1 min-h-0 mb-[4px] border-2 border-t border-[#c0c0c0] border-b-[#a6a6a6] pt-[6px] pl-[2px]">
                <div className="w-[370px] border-l border-[#c0c0c0]">
                  <div className="flex h-[22px] border-y border-[#c0c0c0]">
                    <div className="w-[21px] shrink-0 border-r border-[#c0c0c0] bg-[#f0f0f0]" />
                    <div className="w-[191px] shrink-0 border-r border-[#c0c0c0] bg-gradient-to-b from-[#fbfbfb] to-[#f0f0f0] flex items-center justify-center">属性名称</div>
                    <div className="w-[126px] shrink-0 border-r border-[#c0c0c0] bg-gradient-to-b from-[#fbdfa8] to-[#f2c46c] flex items-center justify-center text-[#6a0a80]">属性值</div>
                    <div className="w-[31px] shrink-0 border-r border-[#c0c0c0] bg-[#f3f3f3] flex items-center justify-center">附加</div>
                  </div>
                  {PROPS.map((p, i) => <PropRow key={p.name} p={p} n={i + 1} />)}
                </div>
              </div>
            </section>
          </div>
        </div>
      </main>

      {/* status bar */}
      <footer className="h-[20px] bg-white flex items-center gap-[2px] shrink-0 pt-px">
        <StatusCell className="w-[148px]" />
        <StatusCell className="w-[78px]"><Sim text="层高:2.15m" /></StatusCell>
        <StatusCell className="w-[98px]"><Sim text="底标高:-2.2m" /></StatusCell>
        <StatusCell className="w-[48px]"><Sim text="0" /></StatusCell>
        <StatusCell className="w-[915px] !bg-white"><Sim text="格式：级别+直径@间距或数量+级别+直径，如:4C12或C12@200或C12-200" /></StatusCell>
        <StatusCell className="w-[69px]"><Sim text="151.6 FPS" /></StatusCell>
      </footer>

      {/* taskbar */}
      <div className="h-[40px] bg-[#03090d] flex shrink-0 text-white">
        <div className="w-[48px] bg-black flex items-center justify-center">
          <svg width="16" height="16" viewBox="0 0 16 16" fill="#fff"><path d="M0 2.500 6.800 1.500v6H0zM7.700 1.400 16 0v7.500H7.700zM0 8.400h6.800v6L0 13.500zM7.700 8.400H16V16l-8.300-1.300z" /></svg>
        </div>
        <div className={`w-[344px] bg-[#333333] flex items-center pl-[9px] text-[#7d93a8] text-[13px] ${CJK}`}>
          <span className="w-[20px] h-[20px] rounded-full border-[3px] border-[#d8d8d8]" />
          <span className="ml-[6px]">在这里输入你要搜索的内容</span>
          <Mic size={17} strokeWidth={1.300} className="ml-auto mr-[12px] text-[#8a8a8a]" />
        </div>
        <div className="flex">
          {TASK_ICONS.map((t, i) => (
            <div key={i} className={`${t.w} h-full flex flex-col items-center ${t.on ? "bg-[#33393c]" : ""}`}>
              <div className="flex-1 flex items-center justify-center">{t.el}</div>
              <div className={`h-[2px] ${t.on ? "w-full" : "w-[40px]"} ${t.bar ? "bg-[#76b9ed]" : ""}`} />
            </div>
          ))}
        </div>
        <div className={`ml-auto flex items-center ${CJK}`}>
          <div className="w-[60px] flex flex-col items-center text-[12px] leading-[17px] text-[#e8e8e8]">
            <span>15%</span>
            <span>CPU使用</span>
          </div>
          <svg width="12" height="7" viewBox="0 0 12 7" className="ml-[13px]"><path d="M.5 6.500 6 1l5.500 5.500" stroke="#fff" fill="none" /></svg>
          <svg width="16" height="12" viewBox="0 0 16 12" className="ml-[10px]"><path d="M0 3h3M0 7h3M3 1h2v9H3z" stroke="#fff" /><rect x="5.500" y="3" width="9" height="7" stroke="#fff" fill="#fff" /></svg>
          <svg width="14" height="13" viewBox="0 0 14 13" className="ml-[10px]" fill="none" stroke="#aaa"><path d="M1 12C1 6 6 2 13 1M4 12c0-4 3-6 8-7M7 12c0-2 2-3 4-3" /><circle cx="11" cy="11" r="1.400" fill="#fff" stroke="none" /></svg>
          <svg width="14" height="13" viewBox="0 0 14 13" className="ml-[8px]" fill="none" stroke="#ddd"><path d="M1 4h3l3-3v11L4 9H1zM9 4c1 1 1 4 0 5M11 3c2 2 2 5 0 7" /></svg>
          <svg width="22" height="12" viewBox="0 0 22 12" className="ml-[10px]" fill="none" stroke="#fff"><rect x=".5" y=".5" width="21" height="11" /><path d="M3 3.500h16M3 6h16M6 8.500h10" strokeDasharray="1 1" /></svg>
          <span className="ml-[10px] w-[14px] text-[13px] font-bold leading-none">中</span>
          <span className="ml-[13px] w-[16px] h-[15px] bg-[#f04d14] rounded-[3px] -rotate-6 flex items-center justify-center text-white font-bold text-[13px] leading-none [font-family:'Liberation_Sans',sans-serif]">S</span>
          <div className="ml-[11px] w-[72px] flex flex-col items-center text-[12px] leading-[18px] text-[#e4e4e4]">
            <span>13:36</span>
            <span className="whitespace-nowrap">2017/11/15</span>
          </div>
          <div className="relative w-[54px] h-full">
            <svg width="16" height="14" viewBox="0 0 16 14" className="absolute left-[12px] top-[12px]" fill="#fff"><path d="M0 0h16v11H0z" /></svg>
            <span className="absolute left-[17px] top-[19px] w-[21px] h-[16px] rounded-full bg-[#3d3d3d] border border-[#777] flex items-center justify-center text-[12px] font-bold leading-none">20</span>
          </div>
        </div>
      </div>

      {/* floating: scan badge */}
      <div className="absolute left-[495px] top-[-19px] w-[38px] h-[38px] rounded-full bg-[#4cc35f] shadow-[0_1px_3px_rgba(0,0,0,0.5)] flex items-end justify-center pb-[4px] text-white text-[11px] font-bold leading-none">68</div>

      {/* floating: ime bar */}
      <div className="absolute left-[995px] top-[3px] w-[160px] h-[24px] bg-white border border-[#b8cbdd] flex items-center text-[#1f7fd0]">
        <span className={`ml-[8px] text-[16px] font-bold leading-none ${CJK}`}>中</span>
        <span className="ml-[7px] w-[13px] text-[12px] font-bold leading-none">°,</span>
        <FaMicrophone className="ml-[8px] text-[14px]" />
        <FaKeyboard className="ml-[8px] text-[16px]" />
        <FaUser className="ml-[8px] text-[13px] text-[#b9c4ce]" />
        <FaShirt className="ml-[9px] text-[14px]" />
        <FaWrench className="ml-[7px] text-[14px]" />
      </div>
      <div className="absolute left-[972px] top-[1px] w-[25px] h-[24px] bg-[#f0501a] rounded-[4px] -rotate-12 flex items-center justify-center text-white text-[22px] font-bold leading-none [font-family:'Liberation_Sans',sans-serif]">S</div>

      {/* red marker annotations */}
      <svg width="1366" height="768" className="absolute inset-0 pointer-events-none" fill="none" stroke="#ff0000" shapeRendering="crispEdges">
        <ellipse cx="616" cy="289.500" rx="89.500" ry="65" strokeWidth="7" />
        <ellipse cx="269" cy="661.500" rx="88" ry="20.500" strokeWidth="6" />
      </svg>
    </div>
  );
}
